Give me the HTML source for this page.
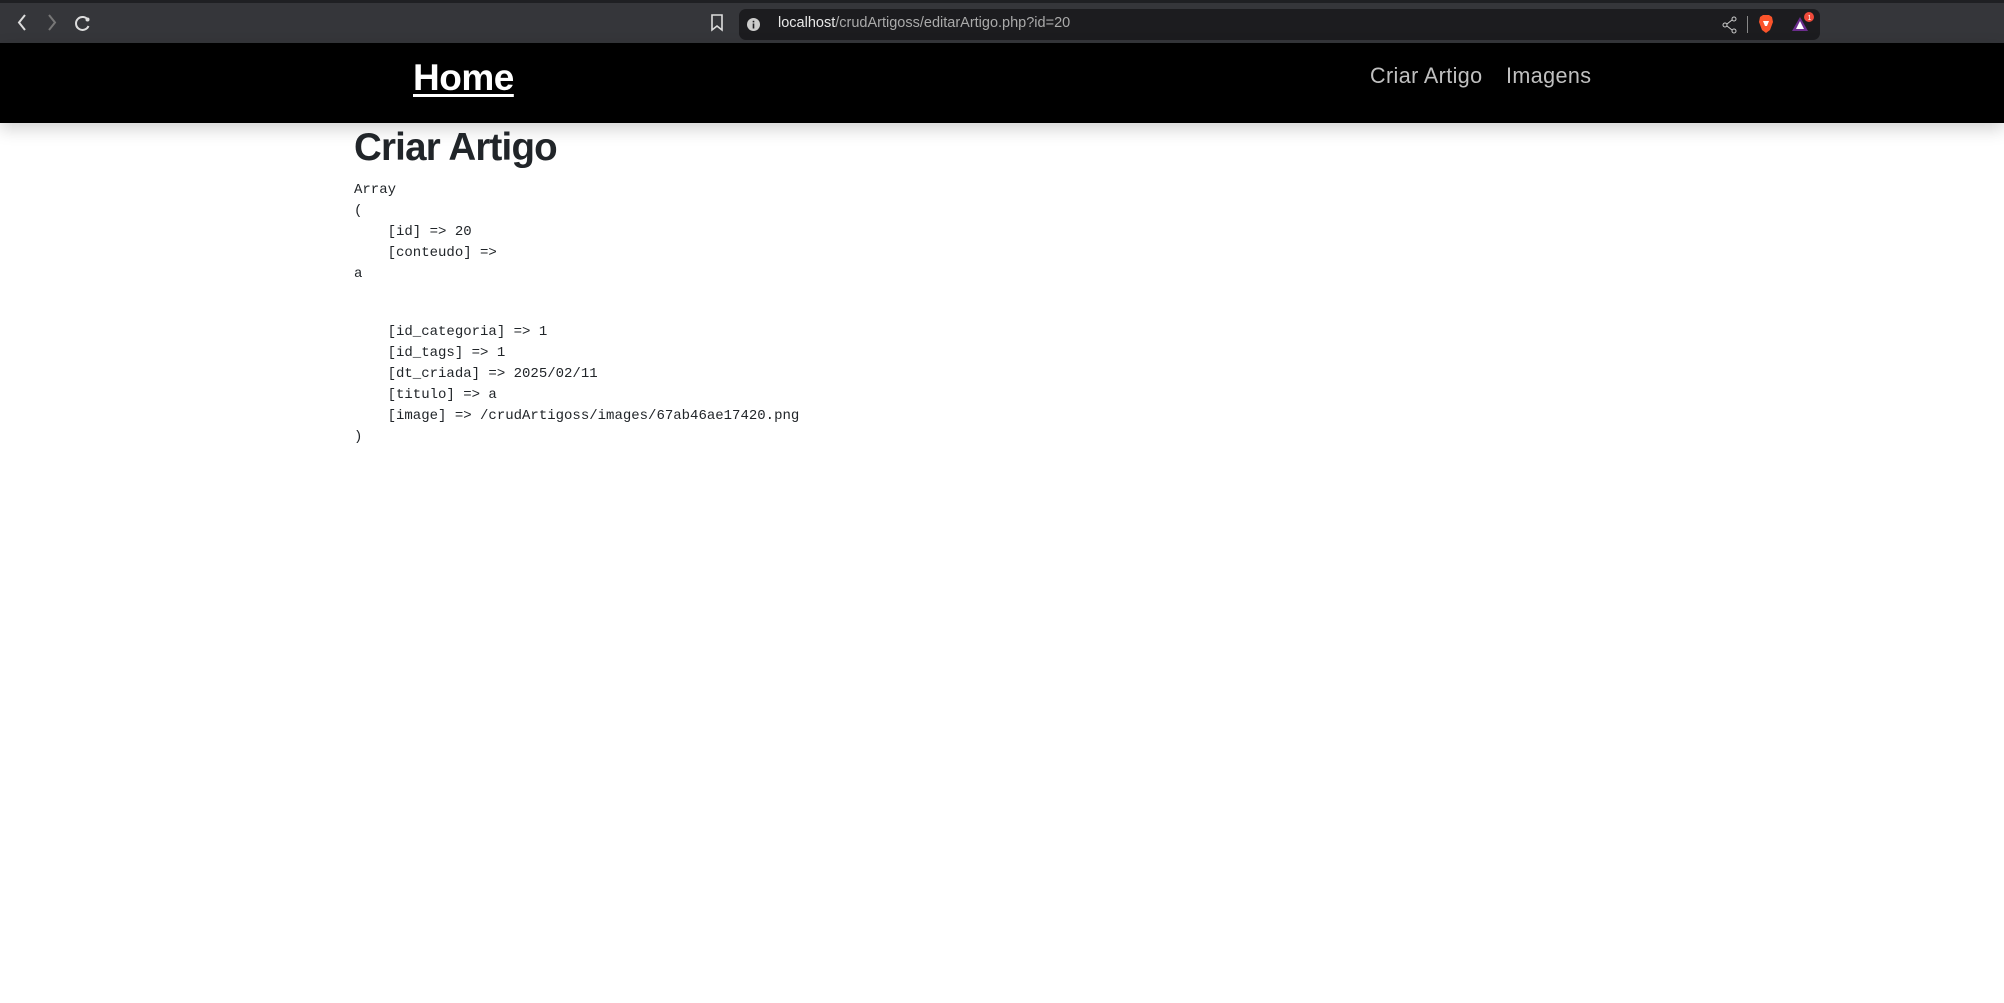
<!DOCTYPE html>
<html><head><meta charset="utf-8">
<style>
*{margin:0;padding:0;box-sizing:border-box}
html,body{width:2004px;height:1003px;overflow:hidden;background:#fff}
body{font-family:"Liberation Sans",sans-serif;position:relative}
.top{position:absolute;left:0;top:0;width:2004px;height:43px;background:#35363a;border-top:3px solid #1f2023}
.url{position:absolute;left:739px;top:6px;width:1081px;height:31px;background:#1c1c1f;border-radius:7px}
.url span{position:absolute;left:39px;top:6px;font-size:14.5px;color:#e8e8e8;letter-spacing:0}
.url span b{font-weight:normal;color:#aaa}
nav{position:absolute;left:0;top:43px;width:2004px;height:80px;background:#000;box-shadow:0 6px 16px rgba(0,0,0,.18)}
.home{position:absolute;left:413px;top:14px;font-size:37px;font-weight:bold;color:#fff;text-decoration:underline;text-decoration-thickness:3px;text-underline-offset:4px;letter-spacing:-0.5px}
.nl{position:absolute;top:20px;font-size:22px;color:#c0c0c0;letter-spacing:0.4px;transform:scaleX(0.98);transform-origin:left}
h1{position:absolute;left:354px;top:126px;font-size:38.5px;font-weight:bold;color:#212529;letter-spacing:-0.8px}
pre{position:absolute;left:354px;font-family:"Liberation Mono",monospace;font-size:14px;line-height:21.1px;color:#212529}
</style></head><body>
<div class="top">
 <svg style="position:absolute;left:0;top:0" width="120" height="40">
  <path d="M25 12 L19 19.5 L25 27" stroke="#ddd" stroke-width="2" fill="none"/>
  <path d="M49 12 L55 19.5 L49 27" stroke="#777" stroke-width="2" fill="none"/>
  <path d="M88 17 A6.5 6.5 0 1 0 88.5 23" stroke="#ddd" stroke-width="2" fill="none"/>
  <circle cx="87.5" cy="16.5" r="2" fill="#ddd"/>
 </svg>
 <svg style="position:absolute;left:710px;top:11px" width="14" height="18"><path d="M2 1 H12 V16 L7 12 L2 16 Z" stroke="#ddd" stroke-width="1.6" fill="none"/></svg>
 <div class="url">
  <svg style="position:absolute;left:8px;top:9px" width="13" height="13"><circle cx="6.5" cy="6.5" r="6.5" fill="#ccc"/><rect x="5.7" y="5.5" width="1.6" height="5" fill="#1c1c1f"/><rect x="5.7" y="2.8" width="1.6" height="1.6" fill="#1c1c1f"/></svg>
  <span>localhost<b>/crudArtigoss/editarArtigo.php?id=20</b></span>
  <svg style="position:absolute;left:982px;top:7px" width="18" height="18"><circle cx="4" cy="9" r="2" stroke="#ccc" fill="none"/><circle cx="13" cy="3" r="2" stroke="#ccc" fill="none"/><circle cx="13" cy="15" r="2" stroke="#ccc" fill="none"/><path d="M6 8 L11 4 M6 10 L11 14" stroke="#ccc"/></svg>
  <div style="position:absolute;left:1008px;top:7px;width:1px;height:17px;background:#888"></div>
  <svg style="position:absolute;left:1019px;top:5px" width="16" height="20"><path d="M2 3 L5 1 H11 L14 3 L15 8 L12 16 L8 19 L4 16 L1 8 Z" fill="#fb542b"/><path d="M5 7 H11 L9 12 H7 Z" fill="#fff"/></svg>
  <svg style="position:absolute;left:1052px;top:2px" width="26" height="24"><path d="M9 6 L17 20 H1 Z" fill="#6b2d8c"/><path d="M9 10 L13 18 H5 Z" fill="#fff"/><circle cx="18" cy="6" r="5" fill="#f04a3a"/><text x="16.5" y="9" font-size="7" fill="#fff" font-family="Liberation Sans">1</text></svg>
 </div>
</div>
<nav>
 <a class="home">Home</a>
 <span class="nl" style="left:1370px">Criar Artigo</span>
 <span class="nl" style="left:1506px">Imagens</span>
</nav>
<h1>Criar Artigo</h1>
<pre style="top:180px">Array
(
    [id] =&gt; 20
    [conteudo] =&gt; 
a</pre>
<pre style="top:322px">    [id_categoria] =&gt; 1
    [id_tags] =&gt; 1
    [dt_criada] =&gt; 2025/02/11
    [titulo] =&gt; a
    [image] =&gt; /crudArtigoss/images/67ab46ae17420.png
)</pre>
</body></html>
